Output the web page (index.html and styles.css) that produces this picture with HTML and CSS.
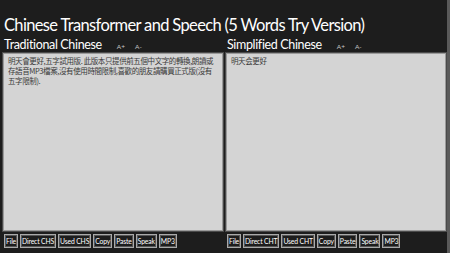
FILE: index.html
```html
<!DOCTYPE html>
<html lang="zh-TW">
<head>
    <meta charset="UTF-8">
    <title>Chinese Transformer and Speech</title>
    <link rel="stylesheet" href="styles.css">
</head>
<body>
    <div class="app">
        <h1 class="title">Chinese Transformer and Speech (5 Words Try Version)</h1>
        <div class="panes">
            <div class="pane">
                <div class="pane-head">
                    <span class="pane-name">Traditional Chinese</span>
                    <span class="size-btn">A+</span>
                    <span class="size-btn">A-</span>
                </div>
                <div class="text-box">明天會更好,五字試用版. 此版本只提供前五個中文字的轉換,朗讀或存語音MP3檔案,沒有使用時間限制,喜歡的朋友請購買正式版(沒有五字限制).</div>
                <div class="toolbar">
                    <button>File</button>
                    <button>Direct CHS</button>
                    <button>Used CHS</button>
                    <button>Copy</button>
                    <button>Paste</button>
                    <button>Speak</button>
                    <button>MP3</button>
                </div>
            </div>
            <div class="pane">
                <div class="pane-head">
                    <span class="pane-name">Simplified Chinese</span>
                    <span class="size-btn">A+</span>
                    <span class="size-btn">A-</span>
                </div>
                <div class="text-box">明天会更好</div>
                <div class="toolbar">
                    <button>File</button>
                    <button>Direct CHT</button>
                    <button>Used CHT</button>
                    <button>Copy</button>
                    <button>Paste</button>
                    <button>Speak</button>
                    <button>MP3</button>
                </div>
            </div>
        </div>
        <div class="edge"></div>
    </div>
</body>
</html>
```

FILE: styles.css
```css
html, body {
    margin: 0;
    padding: 0;
    height: 100%;
}
body {
    background-color: #1d1d1d;
    color: #fff;
    font-family: Lato, "Noto Sans CJK TC", sans-serif;
    overflow: hidden;
}
.app {
    display: flex;
    flex-direction: column;
    height: 253px;
    padding: 0 4px 0 3px;
    position: relative;
}
.title {
    margin: 14px 0 0 1px;
    font-size: 16.5px;
    font-weight: 400;
    line-height: 22px;
    letter-spacing: -0.65px;
    white-space: nowrap;
}
.panes {
    display: flex;
    gap: 3px;
    flex: 1;
    min-height: 0;
}
.pane {
    flex: 1;
    display: flex;
    flex-direction: column;
}
.pane-head {
    display: flex;
    align-items: baseline;
    height: 17px;
    margin-left: 1px;
}
.pane-name {
    font-size: 12.5px;
    line-height: 18px;
    letter-spacing: -0.35px;
}
.size-btn {
    font-size: 6.5px;
    color: #c8c8c8;
    margin-left: 15px;
}
.size-btn + .size-btn {
    margin-left: 10px;
}
.text-box {
    flex: 1;
    background-color: #d4d4d4;
    border: 1px solid #9a9a9a;
    box-shadow: 0 0 0 1px #4a4a4a;
    color: #3a3a3a;
    font-family: "Noto Sans CJK TC", sans-serif;
    font-size: 7.5px;
    line-height: 10px;
    letter-spacing: -0.4px;
    padding: 2px 4px;
}
.toolbar {
    display: flex;
    gap: 2px;
    margin: 3px 0 5px 1px;
}
.toolbar button {
    background-color: #1d1d1d;
    color: #fff;
    border: 1px solid #aaa;
    box-shadow: inset 0 0 0 1px #555;
    font-family: Lato, sans-serif;
    font-size: 6.8px;
    letter-spacing: -0.15px;
    padding: 0 1px;
    height: 14px;
    line-height: 12px;
}
.edge {
    position: absolute;
    top: 0;
    right: 0;
    width: 3px;
    height: 100%;
    background-color: #5a5a5a;
}
```
